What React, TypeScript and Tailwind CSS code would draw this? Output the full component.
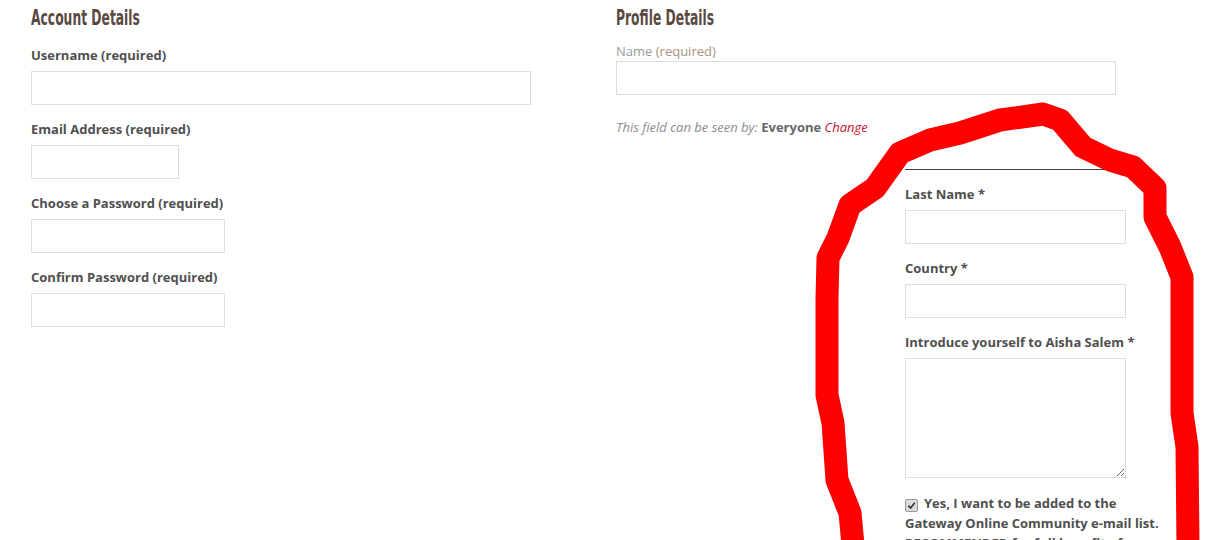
import React from "react"

const label = "block text-[13px] font-bold text-[#4f4f4f] leading-[20px] mb-[6px]"
const input = "block h-[34px] border border-[#dedede] bg-white"
const heading =
  "inline-block origin-left scale-x-[0.56] whitespace-nowrap font-['DejaVu_Sans',sans-serif] font-bold text-[22px] leading-[34px] text-[#5a4941]"

const accountFields = [
  { text: "Username (required)", width: "w-[500px]" },
  { text: "Email Address (required)", width: "w-[148px]" },
  { text: "Choose a Password (required)", width: "w-[194px]" },
  { text: "Confirm Password (required)", width: "w-[194px]" },
]

function Scribble() {
  // red marker drawn over the screenshot
  return (
    <svg className="pointer-events-none absolute inset-0" width="1212" height="540" viewBox="0 0 1212 540">
      <path
        d="M853 545 L850 513 L837 480 L833 423 L827 395 L827 300 L828 258 L838 238 L850 205 L875 188 L900 153 L930 140 L960 133 L1000 120 L1043 114 L1060 120 L1083 147 L1110 160 L1133 167 L1155 188 L1155 217 L1170 247 L1182 277 L1182 413 L1187 447 L1188 545"
        fill="none"
        stroke="#ff0000"
        strokeWidth="23"
        strokeLinejoin="round"
        strokeLinecap="round"
      />
    </svg>
  )
}

export default function App() {
  return (
    <div className="relative w-[1212px] h-[540px] overflow-hidden bg-white font-['Open_Sans',sans-serif]">
      <div className="flex pl-[31px]">
        {/* Account */}
        <div className="w-[585px]">
          <div className="mt-[1px] mb-[10px] h-[34px]">
            <h2 className={heading}>Account Details</h2>
          </div>
          {accountFields.map((f, i) => (
            <div key={i} className="mb-[14px]">
              <label className={label}>{f.text}</label>
              <div className={`${input} ${f.width}`} />
            </div>
          ))}
        </div>

        {/* Profile */}
        <div className="flex-1">
          <div className="mt-[1px] mb-[6px] h-[34px]">
            <h2 className={heading}>Profile Details</h2>
          </div>
          <div className="text-[13px] leading-[20px] text-[#999]">
            Name <span className="text-[#a8927e]">(required)</span>
          </div>
          <div className={`${input} w-[500px]`} />
          <p className="mt-[22px] text-[13px] leading-[20px] text-[#8c8c8c]">
            <i>This field can be seen by:</i> <b className="text-[#666]">Everyone</b>{" "}
            <i className="text-[#c8102e]">Change</i>
          </p>

          <div className="ml-[289px] w-[265px] mt-[32px]">
            <div className="w-[220px] border-t border-[#444] mb-[14px]" />
            <label className={label}>Last Name *</label>
            <div className={`${input} w-[221px] mb-[14px]`} />
            <label className={label}>Country *</label>
            <div className={`${input} w-[221px] mb-[14px]`} />
            <label className={label}>Introduce yourself to Aisha Salem *</label>
            <textarea className="block w-[221px] h-[120px] border border-[#dedede] bg-white outline-none" />
            <div className="mt-[15px] text-[13px] font-bold leading-[20px] text-[#4f4f4f]">
              <span className="inline-flex align-[-2px] mr-[6px] w-[13px] h-[13px] rounded-[2px] border border-[#9a9a9a] bg-[#dcdcdc] items-center justify-center">
                <svg width="9" height="9" viewBox="0 0 10 10">
                  <path d="M1.5 5.2 L4 7.8 L8.6 2" fill="none" stroke="#333" strokeWidth="1.8" />
                </svg>
              </span>
              Yes, I want to be added to the
              <br />
              Gateway Online Community e-mail list. RECOMMENDED for full benefit of membership.
            </div>
          </div>
        </div>
      </div>
      <Scribble />
    </div>
  )
}
